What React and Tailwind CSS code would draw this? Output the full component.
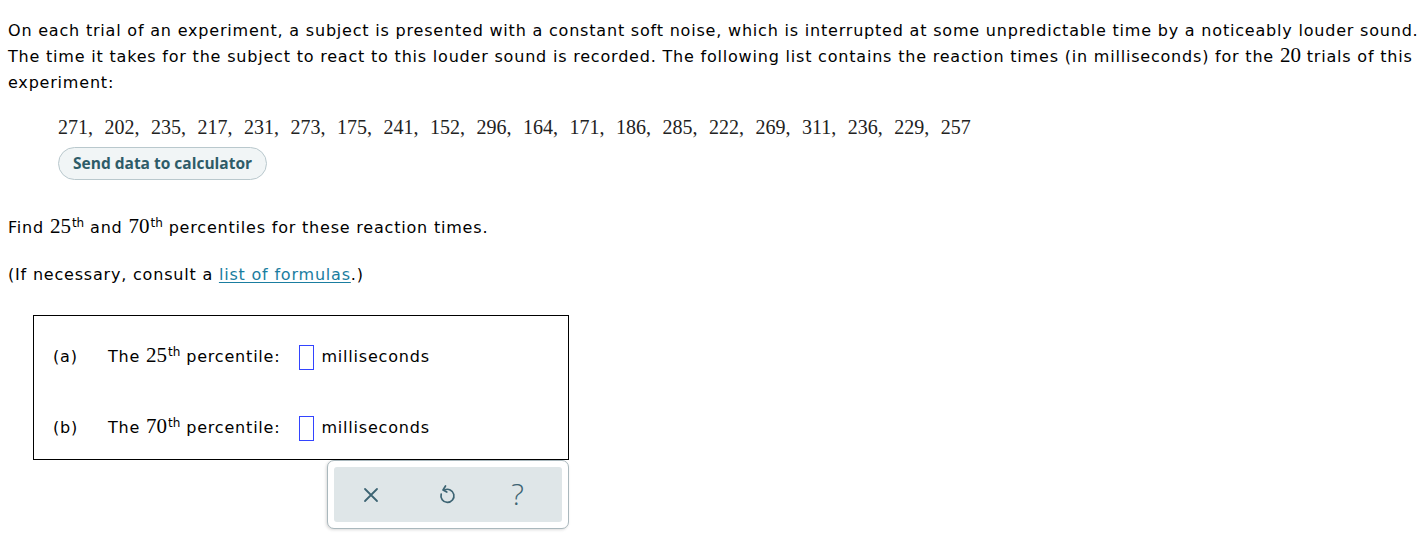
import React from 'react';

const Th = ({ n }) => (
  <span>
    <span className="font-['Liberation_Serif',serif] text-[21px] leading-none tracking-normal">{n}</span>
    <sup className="text-[12px] leading-none relative -top-[6px] ml-[1px] tracking-normal">th</sup>
  </span>
);

const data = '271, 202, 235, 217, 231, 273, 175, 241, 152, 296, 164, 171, 186, 285, 222, 269, 311, 236, 229, 257';

const App = () => {
  return (
    <div className="bg-white min-h-[533px] text-[#000] font-['DejaVu_Sans',sans-serif] text-[16px] leading-[26px] tracking-[0.8px] pl-[8px] pt-[18px]">
      <div className="whitespace-nowrap">
        <div className="h-[26px]">
          On each trial of an experiment, a subject is presented with a constant soft noise, which is interrupted at some unpredictable time by a noticeably louder sound.
        </div>
        <div className="h-[26px]">
          The time it takes for the subject to react to this louder sound is recorded. The following list contains the reaction times (in milliseconds) for the{' '}
          <span className="font-['Liberation_Serif',serif] text-[21px] leading-none tracking-normal">20</span> trials of this
        </div>
        <div className="h-[26px]">experiment:</div>
      </div>

      <div className="pl-[50px] mt-[19px] font-['Liberation_Serif',serif] text-[20px] leading-[24px] tracking-normal [word-spacing:6.5px] text-[#222]">
        {data}
      </div>
      <div className="pl-[50px] mt-[8px]">
        <button className="h-[33px] px-[14px] rounded-full border border-[#b9c8cd] bg-[#f1f5f6] text-[#2e5c68] font-['Open_Sans',sans-serif] font-bold text-[15.5px] tracking-normal leading-none">
          Send data to calculator
        </button>
      </div>

      <p className="mt-[35px] h-[26px]">
        Find <Th n="25" /> and <Th n="70" /> percentiles for these reaction times.
      </p>
      <p className="mt-[21px]">
        (If necessary, consult a{' '}
        <span className="text-[#1a7da0] underline underline-offset-2">list of formulas</span>.)
      </p>

      <div className="ml-[25px] mt-[27px] w-[536px]">
        <div className="border border-black h-[145px] flex flex-col gap-[45px] pt-[28px] pl-[19px]">
          <div className="flex items-center h-[26px]">
            <span className="w-[55px]">(a)</span>
            <span>The <Th n="25" /> percentile:</span>
            <span className="inline-block w-[15px] h-[25px] border border-[#3344ff] ml-[19px] mr-[7px]" />
            <span>milliseconds</span>
          </div>
          <div className="flex items-center h-[26px]">
            <span className="w-[55px]">(b)</span>
            <span>The <Th n="70" /> percentile:</span>
            <span className="inline-block w-[15px] h-[25px] border border-[#3344ff] ml-[19px] mr-[7px]" />
            <span>milliseconds</span>
          </div>
        </div>
        <div className="ml-[294px] w-[242px] h-[69px] border border-[#aab8bd] rounded-[7px] bg-white p-[6px] shadow-[-1px_1px_3px_rgba(0,0,0,0.15)]">
          <div className="h-full rounded-[3px] bg-[#dfe6e8] flex items-center text-[#3d6473]">
            <div className="w-[74px] flex justify-center">
              <svg width="18" height="18" viewBox="0 0 18 18" fill="none" stroke="currentColor" strokeWidth="1.8" strokeLinecap="round">
                <path d="M3 3 L15 15 M15 3 L3 15" />
              </svg>
            </div>
            <div className="w-[78px] flex justify-center">
              <svg width="18" height="22" viewBox="0 0 18 22" fill="none" stroke="currentColor" strokeWidth="1.7" strokeLinecap="round" strokeLinejoin="round">
                <path d="M6.5 6 A6.5 6.5 0 1 1 3.2 10" />
                <path d="M7.5 2 L5 6 L8.8 8" />
              </svg>
            </div>
            <div className="w-[64px] flex justify-center">
              <span className="font-['Open_Sans',sans-serif] text-[30px] font-light leading-none -mt-[2px]">?</span>
            </div>
          </div>
        </div>
      </div>
    </div>
  );
};

export default App;
